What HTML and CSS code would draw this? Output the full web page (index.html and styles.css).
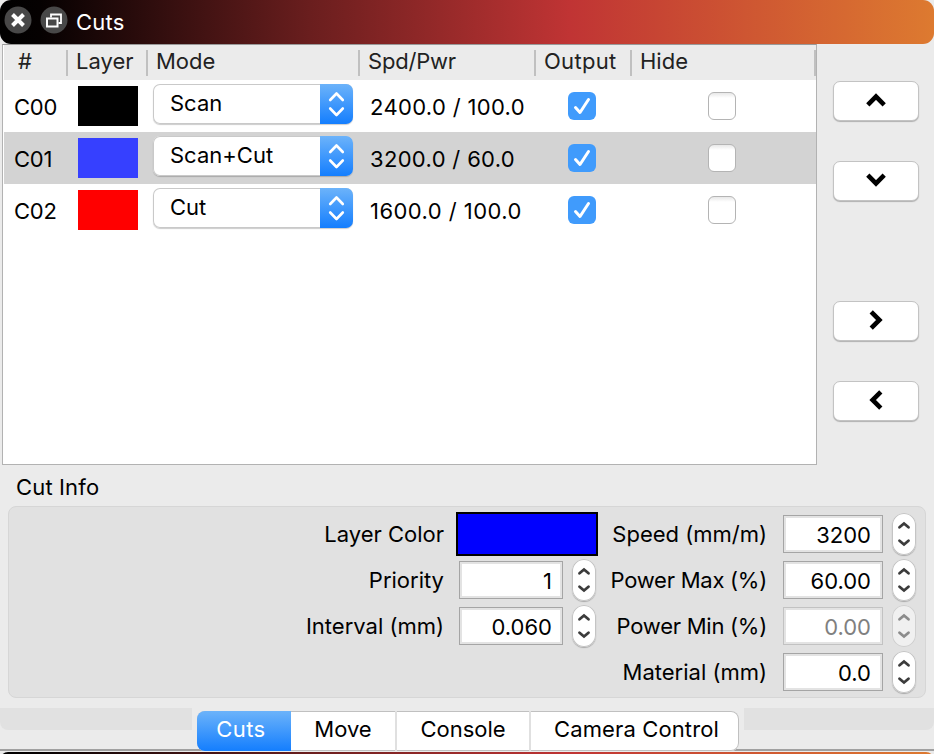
FILE: index.html
```html
<!DOCTYPE html>
<html lang="en">

<head>
    <meta charset="UTF-8">
    <meta name="viewport" content="width=device-width, initial-scale=1.0">
    <title>Cuts</title>
    <link rel="stylesheet" href="styles.css">
</head>

<body>
    <!-- shared icons -->
    <svg class="defs" width="0" height="0">
        <symbol id="updown" viewBox="0 0 33 40">
            <path d="M10.2 16 L16.5 9.5 L22.8 16 M10.2 24.5 L16.5 31 L22.8 24.5" fill="none" stroke="#fff" stroke-width="2.6" stroke-linecap="round" stroke-linejoin="round" />
        </symbol>
        <symbol id="check" viewBox="0 0 28 28">
            <path d="M7.5 15.5 L12 20.5 L20.5 7.5" fill="none" stroke="#fff" stroke-width="3" stroke-linecap="round" stroke-linejoin="round" />
        </symbol>
        <symbol id="spin" viewBox="0 0 24 42">
            <path d="M7.5 14.3 L12 10.5 L16.5 14.3 M7.5 27.7 L12 31.5 L16.5 27.7" fill="none" stroke="currentColor" stroke-width="2.8" stroke-linecap="round" stroke-linejoin="miter" />
        </symbol>
        <symbol id="arrow" viewBox="0 0 20 20">
            <path d="M1.8 14.8 L10 6.6 L18.2 14.8" fill="none" stroke="#000" stroke-width="4.6" />
        </symbol>
    </svg>

    <div class="titlebar">
        <svg class="tool" viewBox="0 0 28 28">
            <circle cx="14" cy="14" r="13.5" fill="#484848" />
            <path d="M8.5 8.5 L19.5 19.5 M19.5 8.5 L8.5 19.5" stroke="#fff" stroke-width="4" />
        </svg>
        <svg class="tool" viewBox="0 0 28 28">
            <circle cx="14" cy="14" r="13.5" fill="#484848" />
            <path d="M11 11.5 V8.5 H21 V17 H18.5" fill="none" stroke="#fff" stroke-width="1.8" />
            <rect x="7" y="12.5" width="10.5" height="8" fill="none" stroke="#fff" stroke-width="2" />
        </svg>
        <span>Cuts</span>
    </div>

    <div class="top">
        <div class="table">
            <div class="row head">
                <div class="th-num">#</div>
                <div>Layer</div>
                <div>Mode</div>
                <div class="th-spd">Spd/Pwr</div>
                <div class="th-out">Output</div>
                <div>Hide</div>
            </div>
            <div class="row">
                <div class="num">C00</div>
                <div class="swatch black"></div>
                <div class="combo"><span>Scan</span><svg><use href="#updown" /></svg></div>
                <div class="spd">2400.0 / 100.0</div>
                <div class="check on"><svg><use href="#check" /></svg></div>
                <div class="check"></div>
            </div>
            <div class="row selected">
                <div class="num">C01</div>
                <div class="swatch blue"></div>
                <div class="combo"><span>Scan+Cut</span><svg><use href="#updown" /></svg></div>
                <div class="spd">3200.0 / 60.0</div>
                <div class="check on"><svg><use href="#check" /></svg></div>
                <div class="check"></div>
            </div>
            <div class="row">
                <div class="num">C02</div>
                <div class="swatch red"></div>
                <div class="combo"><span>Cut</span><svg><use href="#updown" /></svg></div>
                <div class="spd wide">1600.0 / 100.0</div>
                <div class="check on"><svg><use href="#check" /></svg></div>
                <div class="check"></div>
            </div>
        </div>
        <div class="side">
            <button><svg class="up"><use href="#arrow" /></svg></button>
            <button><svg class="down"><use href="#arrow" /></svg></button>
            <button class="gap"><svg class="right"><use href="#arrow" /></svg></button>
            <button><svg class="left"><use href="#arrow" /></svg></button>
        </div>
    </div>

    <div class="caption">Cut Info</div>
    <div class="info">
        <div class="form form-left">
            <label>Layer Color</label>
            <div class="color"></div>
            <label>Priority</label>
            <div class="field"><div class="box">1</div><svg class="spin"><use href="#spin" /></svg></div>
            <label>Interval (mm)</label>
            <div class="field"><div class="box">0.060</div><svg class="spin"><use href="#spin" /></svg></div>
        </div>
        <div class="form form-right">
            <label>Speed (mm/m)</label>
            <div class="field"><div class="box">3200</div><svg class="spin"><use href="#spin" /></svg></div>
            <label class="power">Power Max (%)</label>
            <div class="field"><div class="box">60.00</div><svg class="spin"><use href="#spin" /></svg></div>
            <label class="power">Power Min (%)</label>
            <div class="field disabled"><div class="box">0.00</div><svg class="spin"><use href="#spin" /></svg></div>
            <label>Material (mm)</label>
            <div class="field"><div class="box">0.0</div><svg class="spin"><use href="#spin" /></svg></div>
        </div>
    </div>

    <div class="bottom">
        <div class="band band-left"></div>
        <div class="tabs">
            <div class="tab active">Cuts</div>
            <div class="tab move">Move</div>
            <div class="tab console">Console</div>
            <div class="tab camera">Camera Control</div>
        </div>
        <div class="band band-right"></div>
    </div>
    <div class="next"></div>
</body>

</html>
```

FILE: styles.css
```css
* {
    box-sizing: border-box;
}

body {
    margin: 0;
    width: 934px;
    height: 754px;
    overflow: hidden;
    background-color: #ebebeb;
    font-family: Inter, "Liberation Sans", sans-serif;
    font-size: 22px;
    line-height: 28px;
    color: #000;
    white-space: nowrap;
}

svg {
    display: block;
    flex: none;
}

.defs {
    position: absolute;
}

.titlebar {
    display: flex;
    gap: 8px;
    height: 44px;
    padding: 6px 0 0 4px;
    border-radius: 11px;
    background: linear-gradient(to right, #000 0, #050101 40px, #6a1e1e 310px, #c03434 570px, #dd7a30 934px);
    color: #fff;
}

.titlebar span {
    margin-top: 2px;
    letter-spacing: .2px;
}

.tool {
    width: 28px;
    height: 28px;
}

.top {
    display: flex;
    height: 421px;
}

.table {
    width: 815px;
    margin-left: 2px;
    padding-left: 1px;
    border: 1px solid #b2b2b2;
    border-top-color: #999;
    background-color: #fff;
}

.row {
    display: grid;
    grid-template-columns: 74px 75px 217px 176px 76px 1fr;
    align-items: center;
    width: 812px;
    height: 52px;
}

.head {
    grid-template-columns: 64px 80px 212px 176px 96px 1fr;
    height: 35px;
    background-color: #ebebeb;
    color: #222;
}

.head div {
    height: 26px;
    line-height: 22px;
    padding-left: 8px;
    border-right: 2px solid #c0c0c0;
}

.head .th-num {
    padding-left: 14px;
}

.th-spd {
    letter-spacing: -.2px;
}

.th-out {
    letter-spacing: .3px;
}

.selected {
    background-color: #d3d3d3;
}

.num {
    padding: 2px 0 0 10px;
    letter-spacing: -.2px;
}

.swatch {
    width: 60px;
    height: 40px;
}

.black {
    background-color: #000;
}

.blue {
    background-color: #3640ff;
}

.red {
    background-color: #f00;
}

.combo {
    display: flex;
    justify-content: space-between;
    width: 200px;
    height: 40px;
    margin-top: -4px;
    padding-left: 17px;
    border-radius: 7px;
    background-color: #fff;
    box-shadow: inset 0 0 0 1px #c9c9c9, 0 1px 1px rgba(0, 0, 0, .2);
    line-height: 39px;
}

.combo svg {
    width: 33px;
    height: 40px;
    border-radius: 0 7px 7px 0;
    background: linear-gradient(#6cb3fa, #147efe);
}

.spd {
    padding-top: 2px;
    letter-spacing: .33px;
}

.wide {
    letter-spacing: .45px;
}

.check {
    width: 28px;
    height: 28px;
    margin-left: 22px;
    border: 1px solid #b4b4b4;
    border-radius: 6px;
    background: linear-gradient(#e8e8e8, #fff 5px);
}

.check:last-child {
    margin-left: 86px;
}

.on {
    border: 0;
    background: #409bfc;
}

.on svg {
    width: 28px;
    height: 28px;
}

.side {
    display: flex;
    flex-direction: column;
    gap: 40px;
    padding: 37px 0 0 16px;
}

.side button {
    display: flex;
    justify-content: center;
    width: 86px;
    height: 40px;
    padding: 8px 0 0;
    border: 1px solid #c3c3c3;
    border-radius: 7px;
    background-color: #fff;
    box-shadow: 0 1px 1px rgba(0, 0, 0, .25);
}

.side .gap {
    margin-top: 60px;
}

.side svg {
    width: 20px;
    height: 20px;
}

.down {
    transform: rotate(180deg);
}

.right {
    transform: rotate(90deg);
}

.left {
    transform: rotate(-90deg);
}

.caption {
    height: 41px;
    padding: 8px 0 0 16px;
    letter-spacing: .15px;
}

.info {
    display: flex;
    justify-content: space-between;
    width: 918px;
    height: 192px;
    margin-left: 8px;
    padding: 4px 9px 0 0;
    border: 1px solid #d6d6d6;
    border-radius: 8px;
    background-color: #e1e1e1;
}

.form {
    display: grid;
    grid-template-rows: repeat(4, 46px);
    align-items: center;
    justify-items: end;
}

.form-left {
    grid-template-columns: 435px 154px;
}

.form-right {
    grid-template-columns: 1fr 149px;
}

.power {
    letter-spacing: -.25px;
}

.color {
    width: 142px;
    height: 44px;
    border: 2px solid #000;
    background-color: #00f;
}

.field {
    display: flex;
    align-items: center;
    gap: 9px;
}

.form-left .field {
    margin-right: 2px;
}

.form-left .box {
    width: 104px;
    padding-right: 10px;
}

.box {
    width: 100px;
    height: 38px;
    padding: 4px 11px 0 0;
    border: 1px solid #a5a5a5;
    background-color: #fff;
    box-shadow: inset 0 0 0 2px #e3e3e3;
    line-height: 30px;
    text-align: right;
}

.spin {
    width: 24px;
    height: 42px;
    border-radius: 12px;
    background-color: #fff;
    box-shadow: inset 0 0 0 1px #c4c4c4, 0 1px 1px rgba(0, 0, 0, .25);
    color: #3c3c3c;
}

.disabled .box {
    border-color: #c2c2c2;
    color: #808080;
}

.disabled .spin {
    background-color: #f0f0f0;
    box-shadow: inset 0 0 0 1px #cfcfcf;
    color: #8c8c8c;
}

.bottom {
    display: flex;
    align-items: flex-start;
    height: 53px;
    padding-top: 10px;
    border-bottom: 2px solid #a0a0a0;
}

.band {
    height: 22px;
    background-color: #e1e1e1;
}

.band-left {
    width: 192px;
    border-radius: 0 0 0 8px;
}

.band-right {
    flex: 1;
    border-radius: 0 0 8px 0;
}

.tabs {
    display: flex;
    width: 542px;
    height: 40px;
    margin: 3px 5px 0;
    border-radius: 8px;
    background-color: #fff;
    box-shadow: inset 0 0 0 1px #c0c0c0;
    line-height: 37px;
    text-align: center;
}

.tab {
    border-left: 2px solid #e0e0e0;
}

.active {
    width: 94px;
    padding-right: 6px;
    border: 0;
    border-radius: 8px 0 0 8px;
    background: linear-gradient(#6cb3fa, #147efe);
    color: #fff;
    letter-spacing: .4px;
}

.move {
    width: 104px;
    border: 0;
}

.console {
    width: 134px;
}

.camera {
    width: 210px;
    padding-left: 3px;
    letter-spacing: .12px;
}

.next {
    height: 10px;
    margin-top: 1px;
    border-radius: 8px 8px 0 0;
    background: linear-gradient(to right, #000 0, #050101 40px, #6a1e1e 310px, #c03434 570px, #dd7a30 934px);
}
```
